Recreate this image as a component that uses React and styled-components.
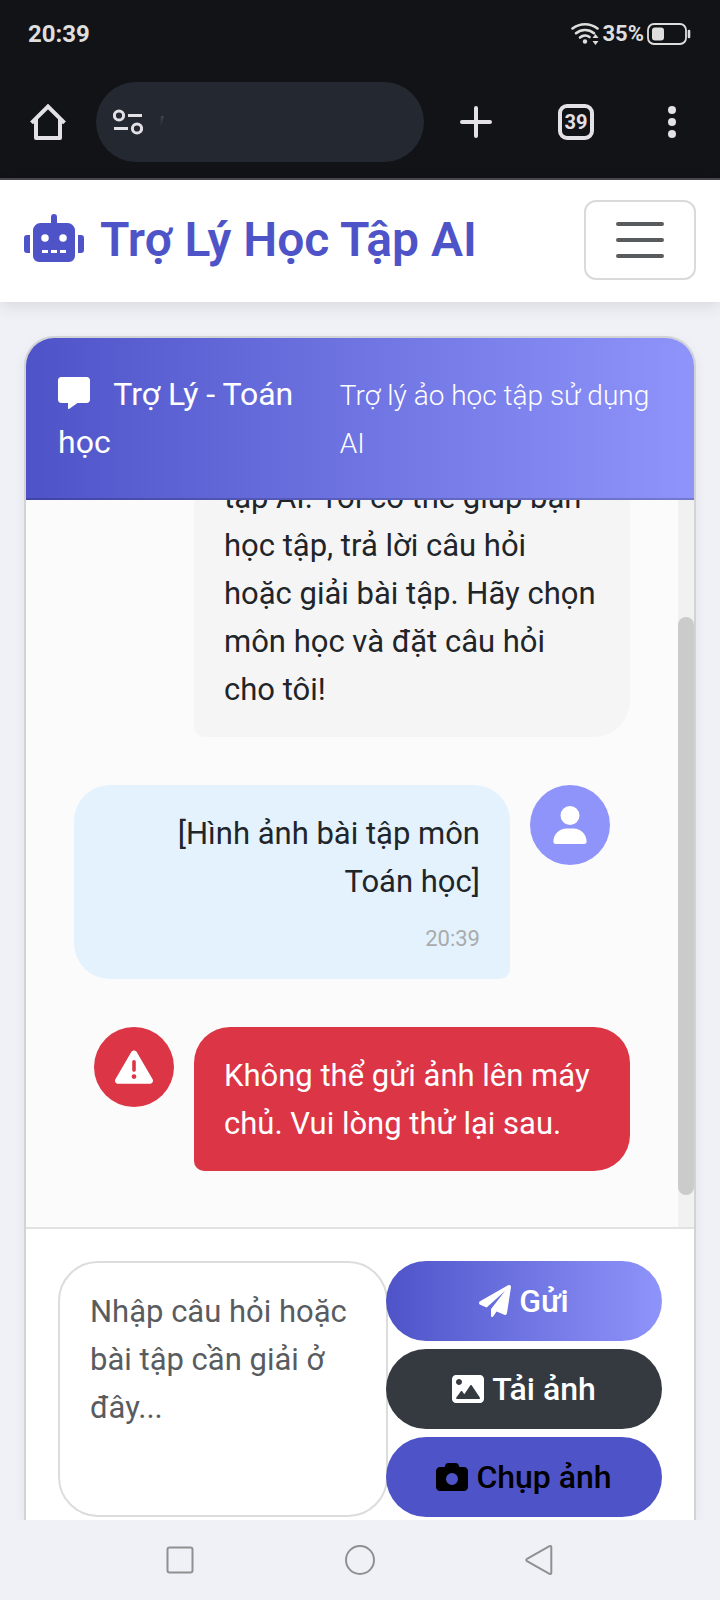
import React from "react";
import styled, { createGlobalStyle } from "styled-components";
import { FaRobot } from "react-icons/fa";
import { FaUser, FaTriangleExclamation, FaCamera } from "react-icons/fa6";

const GlobalStyle = createGlobalStyle`
  *, *::before, *::after { box-sizing: border-box; }
  body {
    margin: 0;
    background: #f0f1f6;
    color: #212529;
    font-family: Roboto, "Noto Sans", sans-serif;
    font-size: 31px;
    line-height: 48px;
  }
  button { font-family: inherit; cursor: pointer; }
`;

const Screen = styled.div`
  display: flex;
  flex-direction: column;
  height: 100vh;
  min-height: 1200px;
`;

/* Phone status bar and browser toolbar */
const SystemTop = styled.header`
  flex: none;
  background: #121317;
  color: #e3e1e6;
  border-bottom: 2px solid #4a484f;
`;

const StatusBar = styled.div`
  display: flex;
  align-items: center;
  justify-content: space-between;
  height: 66px;
  padding: 2px 29px 0 28px;
  line-height: 24px;
`;

const Clock = styled.time`
  font-size: 24px;
  font-weight: 700;
  color: #dedede;
`;

const StatusIcons = styled.div`
  display: flex;
  align-items: center;
  gap: 3px;
  font-size: 22px;
  font-weight: 700;
  color: #dedede;
  svg { display: block; }
`;

const BrowserBar = styled.div`
  display: flex;
  align-items: center;
  height: 112px;
`;

const BarButton = styled.button`
  flex: none;
  display: flex;
  align-items: center;
  justify-content: center;
  width: ${(p) => p.$width}px;
  height: 96px;
  padding: 0;
  border: 0;
  background: none;
  color: inherit;
`;

const AddressBox = styled.div`
  flex: 1;
  display: flex;
  align-items: center;
  gap: 16px;
  height: 80px;
  padding: 0 17px;
  border-radius: 40px;
  background: #242831;
  svg { display: block; flex: none; }
`;

const TabCount = styled.span`
  display: flex;
  align-items: center;
  justify-content: center;
  width: 36px;
  height: 36px;
  border: 4px solid #e3e1e6;
  border-radius: 9px;
  font-size: 20px;
  font-weight: 700;
  line-height: 28px;
`;

/* Site navigation */
const Navbar = styled.nav`
  flex: none;
  display: flex;
  align-items: center;
  justify-content: space-between;
  padding: 20px 24px 22px;
  background: #fff;
  box-shadow: 0 4px 16px rgba(0, 0, 0, 0.1);
  z-index: 1;
`;

const Brand = styled.a`
  color: #4e54c8;
  font-size: 48px;
  font-weight: 600;
  line-height: 72px;
  text-decoration: none;
  white-space: nowrap;
  svg {
    width: 60px;
    height: 48px;
    margin-right: 16px;
    vertical-align: -6px;
  }
`;

const Toggler = styled.button`
  display: flex;
  flex-direction: column;
  align-items: center;
  justify-content: center;
  gap: 12px;
  width: 112px;
  height: 80px;
  padding: 0;
  border: 2px solid #dadada;
  border-radius: 12px;
  background: none;
`;

const TogglerLine = styled.span`
  width: 48px;
  height: 4px;
  border-radius: 2px;
  background: #595c5f;
`;

/* Chat card */
const Page = styled.main`
  flex: 1;
  min-height: 0;
  display: flex;
  padding: 34px 24px 0;
`;

const Card = styled.section`
  flex: 1;
  min-width: 0;
  display: flex;
  flex-direction: column;
  overflow: hidden;
  border: 2px solid #d2d3d5;
  border-bottom: 0;
  border-radius: 30px 30px 0 0;
  background: #fff;
  box-shadow: 0 4px 12px rgba(0, 0, 0, 0.06);
`;

const CardHeader = styled.div`
  flex: none;
  display: grid;
  grid-template-columns: 7fr 8fr;
  padding: 32px;
  border-bottom: 2px solid rgba(0, 0, 0, 0.175);
  background: linear-gradient(90deg, #4e54c8, #8f94fb) border-box;
  color: #fff;
`;

const CardTitle = styled.h1`
  margin: 0;
  font-size: 32px;
  font-weight: 400;
  line-height: 48px;
  svg {
    width: 32px;
    height: 32px;
    margin-right: 16px;
    vertical-align: -4px;
  }
`;

const CardNote = styled.p`
  margin: 0;
  font-size: 32px;
  font-weight: 300;
  small {
    font-size: 28px;
    line-height: 28px;
  }
`;

const ChatArea = styled.div`
  flex: 1;
  min-height: 0;
  display: flex;
  background: #fbfbfb;
`;

const MessageList = styled.div`
  flex: 1;
  min-width: 0;
  display: flex;
  flex-direction: column;
  justify-content: flex-end;
  gap: 48px;
  overflow: hidden;
  padding: 0 48px 56px;
`;

const ScrollTrack = styled.div`
  flex: none;
  width: 16px;
  padding-top: 117px;
  background: #f1f1f1;
`;

const ScrollThumb = styled.div`
  height: 578px;
  border-radius: 8px;
  background: #cbcbcb;
`;

const Message = styled.article`
  flex: none;
  display: flex;
  flex-direction: ${(p) => (p.$own ? "row-reverse" : "row")};
  align-self: ${(p) => (p.$own ? "flex-start" : "flex-end")};
  align-items: flex-start;
  gap: 20px;
  width: calc(100% - 20px);
`;

const Avatar = styled.div`
  flex: none;
  display: flex;
  align-items: center;
  justify-content: center;
  width: 80px;
  height: 80px;
  border-radius: 50%;
  background: ${(p) => p.$color};
  color: #fff;
  font-size: 38px;
`;

const Bubble = styled.div`
  flex: 1;
  display: flex;
  flex-direction: column;
  justify-content: flex-end;
  min-height: ${(p) => (p.$tall ? "336px" : "0")};
  padding: 25px 30px 23px;
  border-radius: ${(p) => (p.$own ? "36px 36px 10px 36px" : "36px 36px 36px 10px")};
  background: ${(p) => p.$color};
  color: ${(p) => p.$text || "#212529"};
  text-align: ${(p) => (p.$own ? "right" : "left")};
  p { margin: 0; }
`;

const Stamp = styled.time`
  display: block;
  margin-top: 16px;
  font-size: 22px;
  line-height: 34px;
  color: #a9abad;
`;

/* Compose form */
const Composer = styled.form`
  flex: none;
  display: grid;
  grid-template-columns: 328fr 276fr;
  padding: 32px 32px 3px;
  border-top: 2px solid #e2e2e2;
`;

const Question = styled.textarea`
  display: block;
  width: calc(100% + 2px);
  height: 256px;
  padding: 25px 30px 23px;
  border: 2px solid #dcdcdc;
  border-radius: 40px;
  background: #fff;
  color: #212529;
  font: inherit;
  resize: none;
  &::placeholder { color: #595c5f; opacity: 1; }
`;

const Actions = styled.div`
  display: flex;
  flex-direction: column;
  gap: 8px;
  z-index: 1;
`;

const ActionButton = styled.button`
  display: flex;
  align-items: center;
  justify-content: center;
  gap: 8px;
  height: 80px;
  padding: 0 24px;
  border: 0;
  border-radius: 40px;
  background: ${(p) => p.$background};
  color: ${(p) => p.$text || "#fff"};
  font-size: 32px;
  font-weight: 500;
  line-height: 48px;
  svg { width: 32px; height: 32px; }
`;

/* Android navigation keys */
const SystemBottom = styled.footer`
  flex: none;
  display: flex;
  height: 80px;
  padding: 0 12.5%;
  background: #f0f1f6;
  z-index: 1;
`;

const KeyButton = styled.button`
  flex: 1;
  display: flex;
  align-items: center;
  justify-content: center;
  padding: 0;
  border: 0;
  background: none;
`;

const WifiIcon = () => (
  <svg width="28" height="24" viewBox="0 0 28 24" fill="none" stroke="currentColor" strokeWidth="2.6" strokeLinecap="round">
    <path d="M1.5 6.5C9 .8 19 .8 26.500 6.500" />
    <path d="M5 11.200C10.500 7 17.500 7 23 11.200" />
    <path d="M9 15.500C12 13 16 13 18.500 15" />
    <circle cx="14" cy="19.500" r="2.200" fill="currentColor" stroke="none" />
    <path d="M24.500 12l3 4h-6zM24.500 23l3-4h-6z" fill="currentColor" stroke="none" />
  </svg>
);

const BatteryIcon = () => (
  <svg width="44" height="22" viewBox="0 0 44 22" fill="none">
    <rect x="1" y="1" width="38" height="20" rx="6" stroke="currentColor" strokeWidth="1.800" />
    <rect x="5" y="4.500" width="12" height="13" rx="3" fill="currentColor" />
    <path d="M42 8v6" stroke="currentColor" strokeWidth="2.600" strokeLinecap="round" />
  </svg>
);

const HomeIcon = () => (
  <svg width="36" height="36" viewBox="0 0 36 36" fill="none" stroke="currentColor" strokeWidth="4" strokeLinejoin="round">
    <path d="M1.500 18.800L18 2.500l16.500 16.300" strokeLinejoin="miter" />
    <path d="M6 15v19h24V15" />
  </svg>
);

const SiteInfoIcon = () => (
  <svg width="30" height="26" viewBox="0 0 30 26" fill="none" stroke="currentColor" strokeWidth="3">
    <circle cx="6" cy="6.500" r="4.600" />
    <path d="M15 6.500h14M1 19.500h14" />
    <circle cx="24" cy="19.500" r="4.600" />
  </svg>
);

const CaretTrace = () => (
  <svg width="6" height="12" viewBox="0 0 6 12">
    <defs>
      <linearGradient id="trace" x1="0" y1="0" x2="0" y2="1">
        <stop offset="0" stopColor="#42454d" />
        <stop offset="1" stopColor="#242831" />
      </linearGradient>
    </defs>
    <path d="M2 0h3L2 11H1z" fill="url(#trace)" />
  </svg>
);

const PlusIcon = () => (
  <svg width="32" height="32" viewBox="0 0 32 32" stroke="currentColor" strokeWidth="4" strokeLinecap="round">
    <path d="M16 2v28M2 16h28" />
  </svg>
);

const DotsIcon = () => (
  <svg width="8" height="32" viewBox="0 0 8 32" fill="currentColor">
    <circle cx="4" cy="4" r="4" />
    <circle cx="4" cy="16" r="4" />
    <circle cx="4" cy="28" r="4" />
  </svg>
);

const MessageIcon = () => (
  <svg viewBox="0 0 512 512" fill="currentColor">
    <path d="M52 0h408c29 0 52 23 52 52v312c0 29-23 52-52 52H312L176 510c-8 5-16 1-16-6v-88H52c-29 0-52-23-52-52V52C0 23 23 0 52 0z" />
  </svg>
);

const PlaneIcon = () => (
  <svg viewBox="0 0 512 512" fill="currentColor">
    <path d="M511.6 36.86l-64 415.1c-1.5 9.734-7.375 18.22-15.97 23.05c-4.844 2.719-10.27 4.097-15.68 4.097c-4.188 0-8.319-.8154-12.29-2.472l-122.6-51.1l-50.86 76.29C226.3 508.5 219.8 512 212.8 512C201.3 512 192 502.7 192 491.2v-96.18c0-7.115 2.372-14.03 6.742-19.64L416 96l-293.7 264.3L19.69 317.5C8.438 312.8 .8125 302.2 .0625 289.1s5.469-23.72 16.06-29.77l448-255.1c10.69-6.109 23.88-5.547 34 1.406S513.5 24.72 511.6 36.86z" />
  </svg>
);

const PictureIcon = () => (
  <svg viewBox="0 0 512 512" fill="currentColor">
    <path
      fillRule="evenodd"
      d="M448 32H64C28.65 32 0 60.65 0 96v320c0 35.35 28.65 64 64 64h384c35.35 0 64-28.65 64-64V96C512 60.65 483.3 32 448 32zM112 96c26.51 0 48 21.49 48 48S138.5 192 112 192s-48-21.49-48-48S85.48 96 112 96zM446.1 407.6C443.3 412.8 437.9 416 432 416H82.01c-6.021 0-11.53-3.379-14.26-8.75c-2.73-5.367-2.215-11.81 1.334-16.68l70-96C142.1 290.4 146.9 288 152 288s9.916 2.441 12.93 6.574l32.46 44.51l93.3-139.1C293.7 194.7 298.7 192 304 192s10.35 2.672 13.31 7.125l128 192C448.6 396 448.9 402.3 446.1 407.6z"
    />
  </svg>
);

const KeyIcon = ({ children }) => (
  <svg width="32" height="32" viewBox="0 0 32 32" fill="none" stroke="#8f9092" strokeWidth="2" strokeLinejoin="round">
    {children}
  </svg>
);

export default function App() {
  return (
    <Screen>
      <GlobalStyle />
      <SystemTop>
        <StatusBar>
          <Clock>20:39</Clock>
          <StatusIcons>
            <WifiIcon />
            <span>35%</span>
            <BatteryIcon />
          </StatusIcons>
        </StatusBar>
        <BrowserBar>
          <BarButton $width={96} aria-label="Trang chủ"><HomeIcon /></BarButton>
          <AddressBox>
            <SiteInfoIcon />
            <CaretTrace />
          </AddressBox>
          <BarButton $width={104} aria-label="Thẻ mới"><PlusIcon /></BarButton>
          <BarButton $width={96} aria-label="Các thẻ đang mở"><TabCount>39</TabCount></BarButton>
          <BarButton $width={96} aria-label="Tùy chọn khác"><DotsIcon /></BarButton>
        </BrowserBar>
      </SystemTop>

      <Navbar>
        <Brand href="#">
          <FaRobot />
          <span>Trợ Lý Học Tập AI</span>
        </Brand>
        <Toggler type="button" aria-label="Mở menu">
          <TogglerLine />
          <TogglerLine />
          <TogglerLine />
        </Toggler>
      </Navbar>

      <Page>
        <Card>
          <CardHeader>
            <CardTitle><MessageIcon /> Trợ Lý - Toán học</CardTitle>
            <CardNote><small>Trợ lý ảo học tập sử dụng AI</small></CardNote>
          </CardHeader>
          <ChatArea>
            <MessageList>
              <Message>
                <Avatar $color="#4e54c8"><FaRobot /></Avatar>
                <Bubble $tall $color="#f5f5f5">
                  <p>
                    tập AI. Tôi có thể giúp bạn học tập, trả lời câu hỏi hoặc
                    giải bài tập. Hãy chọn môn học và đặt câu hỏi cho tôi!
                  </p>
                </Bubble>
              </Message>
              <Message $own>
                <Avatar $color="#8f94fb"><FaUser /></Avatar>
                <Bubble $own $color="#e3f2fd">
                  <p>[Hình ảnh bài tập môn Toán học]</p>
                  <Stamp>20:39</Stamp>
                </Bubble>
              </Message>
              <Message>
                <Avatar $color="#dc3545"><FaTriangleExclamation /></Avatar>
                <Bubble $color="#dc3545" $text="#fff">
                  <p>Không thể gửi ảnh lên máy chủ. Vui lòng thử lại sau.</p>
                </Bubble>
              </Message>
            </MessageList>
            <ScrollTrack><ScrollThumb /></ScrollTrack>
          </ChatArea>
          <Composer onSubmit={(e) => e.preventDefault()}>
            <Question aria-label="Câu hỏi" placeholder="Nhập câu hỏi hoặc bài tập cần giải ở đây..." />
            <Actions>
              <ActionButton type="submit" $background="linear-gradient(90deg, #4e54c8, #8f94fb)">
                <PlaneIcon />
                <span>Gửi</span>
              </ActionButton>
              <ActionButton type="button" $background="#343a40">
                <PictureIcon />
                <span>Tải ảnh</span>
              </ActionButton>
              <ActionButton type="button" $background="#4e54c8" $text="#000">
                <FaCamera />
                <span>Chụp ảnh</span>
              </ActionButton>
            </Actions>
          </Composer>
        </Card>
      </Page>

      <SystemBottom>
        <KeyButton aria-label="Ứng dụng gần đây">
          <KeyIcon><rect x="3.500" y="3.500" width="25" height="25" rx="2" /></KeyIcon>
        </KeyButton>
        <KeyButton aria-label="Màn hình chính">
          <KeyIcon><circle cx="16" cy="16" r="14" /></KeyIcon>
        </KeyButton>
        <KeyButton aria-label="Quay lại">
          <KeyIcon><path d="M3 14.800L25.500 2.200q1.800-.9 1.800 1v25.600q0 1.900-1.800 1L3 17.200q-1.500-1.200 0-2.400z" /></KeyIcon>
        </KeyButton>
      </SystemBottom>
    </Screen>
  );
}
